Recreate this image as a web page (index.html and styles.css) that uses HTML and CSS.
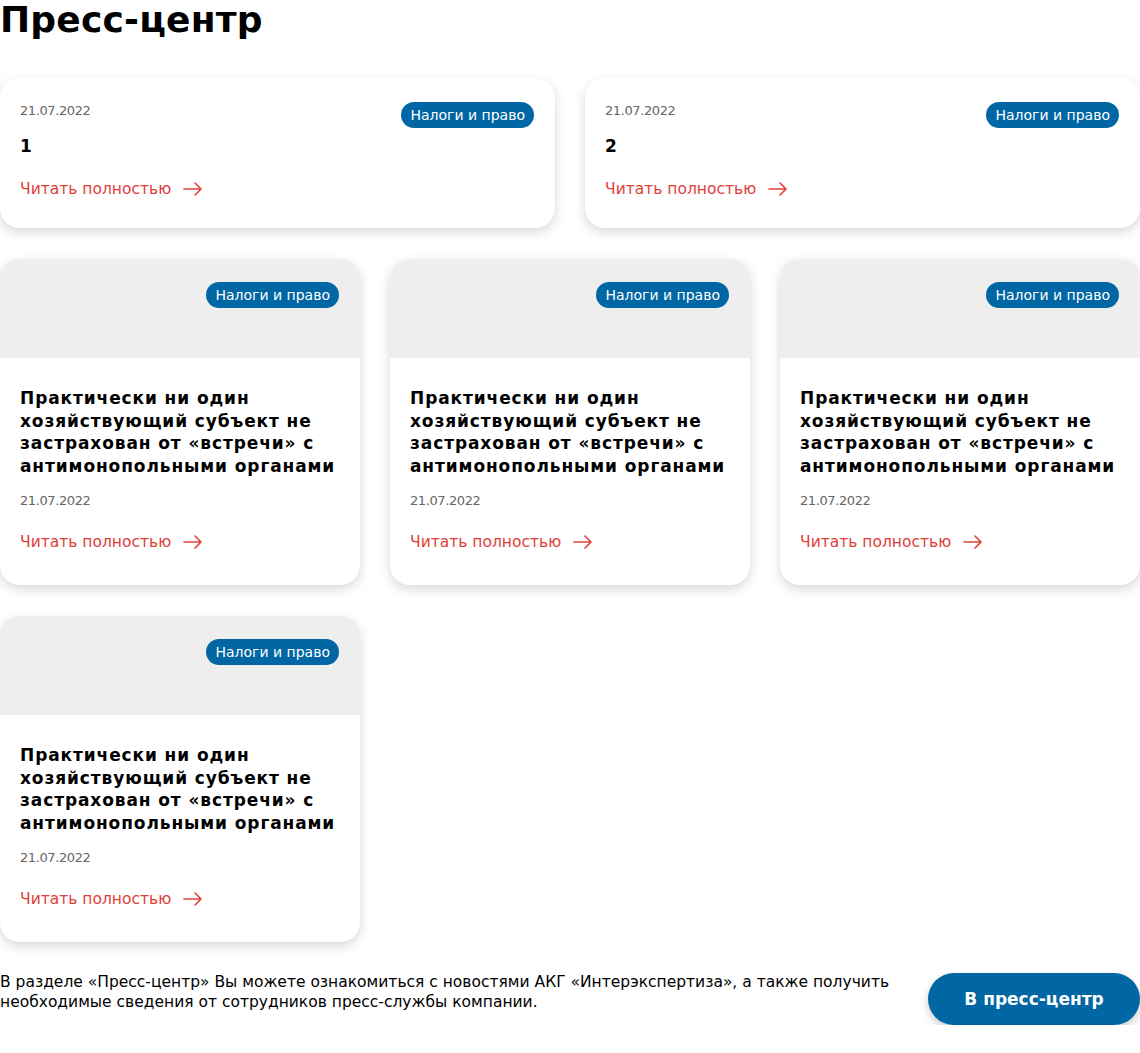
FILE: index.html
```html
<!DOCTYPE html>
<html lang="ru">
<head>
<meta charset="utf-8">
<title>Пресс-центр</title>
<link rel="stylesheet" href="styles.css">
</head>
<body>
<div class="page">
  <h1 class="title">Пресс-центр</h1>

  <div class="grid grid-2">
    <div class="card card-short">
      <div class="card-head">
        <span class="date">21.07.2022</span>
        <span class="tag">Налоги и право</span>
      </div>
      <div class="short-title">1</div>
      <a class="more" href="#">Читать полностью <svg class="arrow" viewBox="0 0 20 14" width="20" height="14"><path d="M1 7H18M12 1L18 7L12 13" fill="none" stroke="currentColor" stroke-width="1.6" stroke-linecap="round" stroke-linejoin="round"/></svg></a>
    </div>
    <div class="card card-short">
      <div class="card-head">
        <span class="date">21.07.2022</span>
        <span class="tag">Налоги и право</span>
      </div>
      <div class="short-title">2</div>
      <a class="more" href="#">Читать полностью <svg class="arrow" viewBox="0 0 20 14" width="20" height="14"><path d="M1 7H18M12 1L18 7L12 13" fill="none" stroke="currentColor" stroke-width="1.6" stroke-linecap="round" stroke-linejoin="round"/></svg></a>
    </div>
  </div>

  <div class="grid grid-3">
    <div class="card card-news">
      <div class="cover"><span class="tag">Налоги и право</span></div>
      <div class="news-body">
        <div class="news-title">Практически ни один хозяйствующий субъект не застрахован от «встречи» с антимонопольными органами</div>
        <div class="date news-date">21.07.2022</div>
        <a class="more" href="#">Читать полностью <svg class="arrow" viewBox="0 0 20 14" width="20" height="14"><path d="M1 7H18M12 1L18 7L12 13" fill="none" stroke="currentColor" stroke-width="1.6" stroke-linecap="round" stroke-linejoin="round"/></svg></a>
      </div>
    </div>
    <div class="card card-news">
      <div class="cover"><span class="tag">Налоги и право</span></div>
      <div class="news-body">
        <div class="news-title">Практически ни один хозяйствующий субъект не застрахован от «встречи» с антимонопольными органами</div>
        <div class="date news-date">21.07.2022</div>
        <a class="more" href="#">Читать полностью <svg class="arrow" viewBox="0 0 20 14" width="20" height="14"><path d="M1 7H18M12 1L18 7L12 13" fill="none" stroke="currentColor" stroke-width="1.6" stroke-linecap="round" stroke-linejoin="round"/></svg></a>
      </div>
    </div>
    <div class="card card-news">
      <div class="cover"><span class="tag">Налоги и право</span></div>
      <div class="news-body">
        <div class="news-title">Практически ни один хозяйствующий субъект не застрахован от «встречи» с антимонопольными органами</div>
        <div class="date news-date">21.07.2022</div>
        <a class="more" href="#">Читать полностью <svg class="arrow" viewBox="0 0 20 14" width="20" height="14"><path d="M1 7H18M12 1L18 7L12 13" fill="none" stroke="currentColor" stroke-width="1.6" stroke-linecap="round" stroke-linejoin="round"/></svg></a>
      </div>
    </div>
    <div class="card card-news">
      <div class="cover"><span class="tag">Налоги и право</span></div>
      <div class="news-body">
        <div class="news-title">Практически ни один хозяйствующий субъект не застрахован от «встречи» с антимонопольными органами</div>
        <div class="date news-date">21.07.2022</div>
        <a class="more" href="#">Читать полностью <svg class="arrow" viewBox="0 0 20 14" width="20" height="14"><path d="M1 7H18M12 1L18 7L12 13" fill="none" stroke="currentColor" stroke-width="1.6" stroke-linecap="round" stroke-linejoin="round"/></svg></a>
      </div>
    </div>
  </div>

  <div class="footer">
    <p class="footer-text">В разделе «Пресс-центр» Вы можете ознакомиться с новостями АКГ «Интерэкспертиза», а также получить необходимые сведения от сотрудников пресс-службы компании.</p>
    <a class="btn" href="#">В пресс-центр</a>
  </div>
</div>
</body>
</html>
```

FILE: styles.css
```css
* { box-sizing: border-box; }
body {
  margin: 0;
  background: #fff;
  font-family: "DejaVu Sans", "Open Sans", sans-serif;
  color: #000;
}
.page {
  width: 1140px;
}
.title {
  margin: 0;
  font-size: 36px;
  line-height: 40px;
  font-weight: 700;
  letter-spacing: 0.2px;
}
.grid {
  display: grid;
  column-gap: 30px;
  row-gap: 31px;
}
.grid-2 {
  grid-template-columns: 1fr 1fr;
  margin-top: 38px;
}
.grid-3 {
  grid-template-columns: repeat(3, 1fr);
  margin-top: 31px;
}
.card {
  background: #fff;
  border-radius: 20px;
  box-shadow: 0 4px 12px rgba(0, 0, 0, 0.16);
  overflow: hidden;
}
.card-short {
  padding: 24px 21px 29px 20px;
  height: 150px;
}
.card-head {
  display: flex;
  justify-content: space-between;
  align-items: flex-start;
}
.date {
  font-size: 13px;
  line-height: 18px;
  color: #666;
  letter-spacing: -0.4px;
}
.tag {
  display: inline-block;
  background: #0066a4;
  color: #fff;
  font-size: 14px;
  line-height: 26px;
  height: 26px;
  padding: 0 9px;
  border-radius: 13px;
  white-space: nowrap;
}
.short-title {
  margin-top: 7px;
  font-size: 17px;
  line-height: 22px;
  font-weight: 700;
}
.more {
  display: inline-flex;
  align-items: center;
  gap: 12px;
  margin-top: 22px;
  font-size: 15.5px;
  line-height: 20px;
  color: #e0403a;
  text-decoration: none;
}
.arrow {
  display: block;
}
.card-news {
  height: 326px;
}
.cover {
  height: 99px;
  background: #eeeeee;
  display: flex;
  justify-content: flex-end;
  align-items: flex-start;
  padding: 23px 21px 0 0;
}
.news-body {
  padding: 29px 20px 33px 20px;
}
.news-title {
  font-size: 17px;
  line-height: 22.7px;
  font-weight: 700;
  letter-spacing: 0.9px;
}
.news-date {
  margin-top: 14px;
}
.news-body .more {
  margin-top: 22px;
}
.footer {
  margin-top: 30px;
  display: flex;
  justify-content: space-between;
  align-items: flex-start;
}
.footer-text {
  margin: 0;
  width: 910px;
  font-size: 15.5px;
  line-height: 20px;
}
.btn {
  margin-top: 1px;
  width: 212px;
  height: 52px;
  border-radius: 26px;
  background: #0066a4;
  color: #fff;
  font-weight: 700;
  font-size: 17px;
  display: flex;
  align-items: center;
  justify-content: center;
  text-decoration: none;
  box-shadow: 0 4px 8px rgba(0, 0, 0, 0.2);
}
```
